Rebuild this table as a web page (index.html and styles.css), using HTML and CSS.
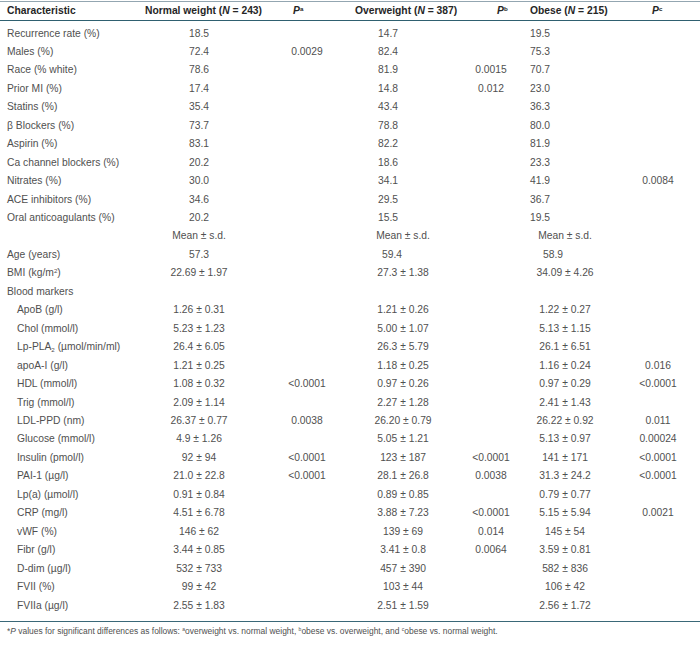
FILE: index.html
```html
<!DOCTYPE html>
<html>
<head>
<meta charset="utf-8">
<link rel="stylesheet" href="styles.css">
</head>
<body>
<table class="tbl">
<colgroup>
<col class="c1"><col class="c2"><col class="c3"><col class="c4"><col class="c5"><col class="c6"><col class="c7">
</colgroup>
<thead>
<tr>
<th class="h1">Characteristic</th>
<th class="h2">Normal weight (<i>N</i> = 243)</th>
<th class="h3"><i>P</i><sup>a</sup></th>
<th class="h4">Overweight (<i>N</i> = 387)</th>
<th class="h5"><i>P</i><sup>b</sup></th>
<th class="h6">Obese (<i>N</i> = 215)</th>
<th class="h7"><i>P</i><sup>c</sup></th>
</tr>
</thead>
<tbody>
<tr class="pct first"><td class="lab">Recurrence rate (%)</td><td class="nw">18.5</td><td class="pa"></td><td class="ow">14.7</td><td class="pb"></td><td class="ob">19.5</td><td class="pc"></td></tr>
<tr class="pct"><td class="lab">Males (%)</td><td class="nw">72.4</td><td class="pa">0.0029</td><td class="ow">82.4</td><td class="pb"></td><td class="ob">75.3</td><td class="pc"></td></tr>
<tr class="pct"><td class="lab">Race (% white)</td><td class="nw">78.6</td><td class="pa"></td><td class="ow">81.9</td><td class="pb">0.0015</td><td class="ob">70.7</td><td class="pc"></td></tr>
<tr class="pct"><td class="lab">Prior MI (%)</td><td class="nw">17.4</td><td class="pa"></td><td class="ow">14.8</td><td class="pb">0.012</td><td class="ob">23.0</td><td class="pc"></td></tr>
<tr class="pct"><td class="lab">Statins (%)</td><td class="nw">35.4</td><td class="pa"></td><td class="ow">43.4</td><td class="pb"></td><td class="ob">36.3</td><td class="pc"></td></tr>
<tr class="pct"><td class="lab">β Blockers (%)</td><td class="nw">73.7</td><td class="pa"></td><td class="ow">78.8</td><td class="pb"></td><td class="ob">80.0</td><td class="pc"></td></tr>
<tr class="pct"><td class="lab">Aspirin (%)</td><td class="nw">83.1</td><td class="pa"></td><td class="ow">82.2</td><td class="pb"></td><td class="ob">81.9</td><td class="pc"></td></tr>
<tr class="pct"><td class="lab">Ca channel blockers (%)</td><td class="nw">20.2</td><td class="pa"></td><td class="ow">18.6</td><td class="pb"></td><td class="ob">23.3</td><td class="pc"></td></tr>
<tr class="pct"><td class="lab">Nitrates (%)</td><td class="nw">30.0</td><td class="pa"></td><td class="ow">34.1</td><td class="pb"></td><td class="ob">41.9</td><td class="pc">0.0084</td></tr>
<tr class="pct"><td class="lab">ACE inhibitors (%)</td><td class="nw">34.6</td><td class="pa"></td><td class="ow">29.5</td><td class="pb"></td><td class="ob">36.7</td><td class="pc"></td></tr>
<tr class="pct"><td class="lab">Oral anticoagulants (%)</td><td class="nw">20.2</td><td class="pa"></td><td class="ow">15.5</td><td class="pb"></td><td class="ob">19.5</td><td class="pc"></td></tr>
<tr><td class="lab"></td><td class="nw">Mean ± s.d.</td><td class="pa"></td><td class="ow">Mean ± s.d.</td><td class="pb"></td><td class="ob">Mean ± s.d.</td><td class="pc"></td></tr>
<tr class="age"><td class="lab">Age (years)</td><td class="nw">57.3</td><td class="pa"></td><td class="ow">59.4</td><td class="pb"></td><td class="ob">58.9</td><td class="pc"></td></tr>
<tr><td class="lab">BMI (kg/m<sup>2</sup>)</td><td class="nw">22.69 ± 1.97</td><td class="pa"></td><td class="ow">27.3 ± 1.38</td><td class="pb"></td><td class="ob">34.09 ± 4.26</td><td class="pc"></td></tr>
<tr><td class="lab">Blood markers</td><td class="nw"></td><td class="pa"></td><td class="ow"></td><td class="pb"></td><td class="ob"></td><td class="pc"></td></tr>
<tr><td class="lab sub">ApoB (g/l)</td><td class="nw">1.26 ± 0.31</td><td class="pa"></td><td class="ow">1.21 ± 0.26</td><td class="pb"></td><td class="ob">1.22 ± 0.27</td><td class="pc"></td></tr>
<tr><td class="lab sub">Chol (mmol/l)</td><td class="nw">5.23 ± 1.23</td><td class="pa"></td><td class="ow">5.00 ± 1.07</td><td class="pb"></td><td class="ob">5.13 ± 1.15</td><td class="pc"></td></tr>
<tr><td class="lab sub">Lp-PLA<sub>2</sub> (µmol/min/ml)</td><td class="nw">26.4 ± 6.05</td><td class="pa"></td><td class="ow">26.3 ± 5.79</td><td class="pb"></td><td class="ob">26.1 ± 6.51</td><td class="pc"></td></tr>
<tr><td class="lab sub">apoA-I (g/l)</td><td class="nw">1.21 ± 0.25</td><td class="pa"></td><td class="ow">1.18 ± 0.25</td><td class="pb"></td><td class="ob">1.16 ± 0.24</td><td class="pc">0.016</td></tr>
<tr><td class="lab sub">HDL (mmol/l)</td><td class="nw">1.08 ± 0.32</td><td class="pa">&lt;0.0001</td><td class="ow">0.97 ± 0.26</td><td class="pb"></td><td class="ob">0.97 ± 0.29</td><td class="pc">&lt;0.0001</td></tr>
<tr><td class="lab sub">Trig (mmol/l)</td><td class="nw">2.09 ± 1.14</td><td class="pa"></td><td class="ow">2.27 ± 1.28</td><td class="pb"></td><td class="ob">2.41 ± 1.43</td><td class="pc"></td></tr>
<tr><td class="lab sub">LDL-PPD (nm)</td><td class="nw">26.37 ± 0.77</td><td class="pa">0.0038</td><td class="ow">26.20 ± 0.79</td><td class="pb"></td><td class="ob">26.22 ± 0.92</td><td class="pc">0.011</td></tr>
<tr><td class="lab sub">Glucose (mmol/l)</td><td class="nw">4.9 ± 1.26</td><td class="pa"></td><td class="ow">5.05 ± 1.21</td><td class="pb"></td><td class="ob">5.13 ± 0.97</td><td class="pc">0.00024</td></tr>
<tr><td class="lab sub">Insulin (pmol/l)</td><td class="nw">92 ± 94</td><td class="pa">&lt;0.0001</td><td class="ow">123 ± 187</td><td class="pb">&lt;0.0001</td><td class="ob">141 ± 171</td><td class="pc">&lt;0.0001</td></tr>
<tr><td class="lab sub">PAI-1 (µg/l)</td><td class="nw">21.0 ± 22.8</td><td class="pa">&lt;0.0001</td><td class="ow">28.1 ± 26.8</td><td class="pb">0.0038</td><td class="ob">31.3 ± 24.2</td><td class="pc">&lt;0.0001</td></tr>
<tr><td class="lab sub">Lp(a) (µmol/l)</td><td class="nw">0.91 ± 0.84</td><td class="pa"></td><td class="ow">0.89 ± 0.85</td><td class="pb"></td><td class="ob">0.79 ± 0.77</td><td class="pc"></td></tr>
<tr><td class="lab sub">CRP (mg/l)</td><td class="nw">4.51 ± 6.78</td><td class="pa"></td><td class="ow">3.88 ± 7.23</td><td class="pb">&lt;0.0001</td><td class="ob">5.15 ± 5.94</td><td class="pc">0.0021</td></tr>
<tr><td class="lab sub">vWF (%)</td><td class="nw">146 ± 62</td><td class="pa"></td><td class="ow">139 ± 69</td><td class="pb">0.014</td><td class="ob">145 ± 54</td><td class="pc"></td></tr>
<tr><td class="lab sub">Fibr (g/l)</td><td class="nw">3.44 ± 0.85</td><td class="pa"></td><td class="ow">3.41 ± 0.8</td><td class="pb">0.0064</td><td class="ob">3.59 ± 0.81</td><td class="pc"></td></tr>
<tr><td class="lab sub">D-dim (µg/l)</td><td class="nw">532 ± 733</td><td class="pa"></td><td class="ow">457 ± 390</td><td class="pb"></td><td class="ob">582 ± 836</td><td class="pc"></td></tr>
<tr><td class="lab sub">FVII (%)</td><td class="nw">99 ± 42</td><td class="pa"></td><td class="ow">103 ± 44</td><td class="pb"></td><td class="ob">106 ± 42</td><td class="pc"></td></tr>
<tr class="last"><td class="lab sub">FVIIa (µg/l)</td><td class="nw">2.55 ± 1.83</td><td class="pa"></td><td class="ow">2.51 ± 1.59</td><td class="pb"></td><td class="ob">2.56 ± 1.72</td><td class="pc"></td></tr>
</tbody>
</table>
<p class="note">*<i>P</i> values for significant differences as follows: <sup>a</sup>overweight vs. normal weight, <sup>b</sup>obese vs. overweight, and <sup>c</sup>obese vs. normal weight.</p>
</body>
</html>
```

FILE: styles.css
```css
html, body {
  margin: 0;
  padding: 0;
  background: #ffffff;
}

body {
  font-family: "Liberation Sans", Arial, sans-serif;
  color: #505050;
}

.tbl {
  width: 700px;
  margin-top: 1px;
  border-collapse: collapse;
  table-layout: fixed;
  font-size: 10.3px;
}

.c1 { width: 140px; }
.c2 { width: 118px; }
.c3 { width: 94px; }
.c4 { width: 102px; }
.c5 { width: 74px; }
.c6 { width: 74px; }
.c7 { width: 98px; }

.tbl th {
  height: 18px;
  padding: 0;
  text-align: left;
  font-weight: bold;
  color: #262626;
  white-space: nowrap;
  border-top: 1px solid #93a6b1;
  border-bottom: 1.5px solid #2f6070;
  line-height: 18px;
}

.tbl th sup,
.tbl td sup,
.note sup {
  font-size: 60%;
  line-height: 0;
  vertical-align: 0.5em;
  font-weight: normal;
}

.tbl th sup { font-weight: bold; }

.tbl sub {
  font-size: 60%;
  line-height: 0;
  vertical-align: -0.25em;
}

.h1 { padding-left: 7px !important; }
.h2 { padding-left: 5px !important; }
.h3 { padding-left: 35px !important; }
.h4 { padding-left: 3px !important; }
.h5 { padding-left: 43px !important; }
.h6 { padding-left: 2px !important; }
.h7 { padding-left: 50px !important; }

.tbl td {
  padding: 0;
  line-height: 18.45px;
  text-align: center;
  white-space: nowrap;
}

.tbl td.lab {
  text-align: left;
  padding-left: 7px;
}

.tbl td.lab.sub {
  padding-left: 17px;
}

.tbl td.pa { padding-left: 4px; }
.tbl td.pc { padding-left: 14px; }

.tbl tr.pct td.ow { padding-right: 30px; }
.tbl tr.pct td.ob { padding-right: 50px; }
.tbl tr.age td.ow { padding-right: 22px; }
.tbl tr.age td.ob { padding-right: 24px; }

.tbl tr.first td { padding-top: 3.5px; }

.tbl tr.last td {
  padding-bottom: 6px;
  border-bottom: 1.5px solid #3a6878;
}

.note {
  margin: 3px 0 0 0;
  padding-left: 7px;
  font-size: 8.45px;
  line-height: 12px;
  color: #505050;
  white-space: nowrap;
}
```
